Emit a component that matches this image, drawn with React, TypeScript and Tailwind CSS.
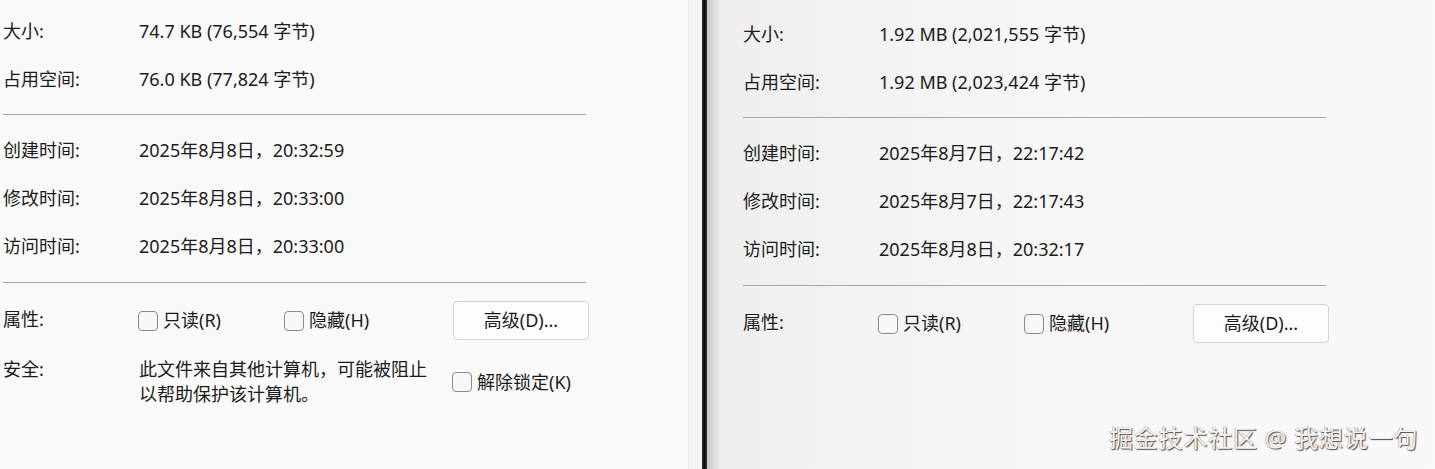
import React from 'react';

type Row = { label: string; value: string };

const font = 'font-["Noto_Sans","Noto_Sans_CJK_SC",sans-serif]';

function CheckBox({ label }: { label: string }) {
  return (
    <label className="flex items-center gap-[5px]">
      <span className="block w-[20px] h-[20px] rounded-[4px] border border-[#8c8c8c] bg-[#f7f7f7]" />
      <span>{label}</span>
    </label>
  );
}

function InfoRow({ label, value }: Row) {
  return (
    <div className="flex items-center h-[48px]">
      <div className="w-[136px]">{label}</div>
      <div>{value}</div>
    </div>
  );
}

function Panel({
  top,
  sizeRows,
  timeRows,
  security,
}: {
  top: string;
  sizeRows: Row[];
  timeRows: Row[];
  security?: boolean;
}) {
  return (
    <div className={`${top} pl-[3px] text-[18px] leading-[25px] text-[#1b1b1b] ${font}`}>
      {sizeRows.map((r) => (
        <InfoRow key={r.label} {...r} />
      ))}
      <div className="mt-[11px] h-px w-[583px] bg-[#a6a6a6]" />
      <div className="mt-[11px]">
        {timeRows.map((r) => (
          <InfoRow key={r.label} {...r} />
        ))}
      </div>
      <div className="mt-[12px] h-px w-[583px] bg-[#a6a6a6]" />
      <div className="mt-[18px] flex items-center h-[39px]">
        <div className="w-[135px] -mt-[3px]">属性:</div>
        <div className="w-[146px]">
          <CheckBox label="只读(R)" />
        </div>
        <div className="w-[169px]">
          <CheckBox label="隐藏(H)" />
        </div>
        <button className="w-[136px] h-[39px] rounded-[4px] border border-[#d3d3d3] bg-[#fdfdfd] text-[18px]">
          高级(D)...
        </button>
      </div>
      {security && (
        <div className="mt-[17px] flex items-center">
          <div className="w-[136px] self-start">安全:</div>
          <div className="w-[313px]">
            此文件来自其他计算机，可能被阻止
            <br />
            以帮助保护该计算机。
          </div>
          <CheckBox label="解除锁定(K)" />
        </div>
      )}
    </div>
  );
}

export default function App() {
  return (
    <div className="relative flex w-[1435px] h-[469px] overflow-hidden bg-[#f9f9f9]">
      <div className="w-[688px] shrink-0 bg-[#f9f9f9]">
        <Panel
          top="pt-[7px]"
          security
          sizeRows={[
            { label: '大小:', value: '74.7 KB (76,554 字节)' },
            { label: '占用空间:', value: '76.0 KB (77,824 字节)' },
          ]}
          timeRows={[
            { label: '创建时间:', value: '2025年8月8日，20:32:59' },
            { label: '修改时间:', value: '2025年8月8日，20:33:00' },
            { label: '访问时间:', value: '2025年8月8日，20:33:00' },
          ]}
        />
      </div>
      <div className="w-[14px] shrink-0 bg-[#f3f3f3] border-l border-[#ececec]" />
      <div className="w-[5px] shrink-0 bg-gradient-to-r from-[#2a2a2a] via-[#0c0c0c] to-[#3a3a3a]" />
      <div className="w-[13px] shrink-0 bg-gradient-to-r from-[#c6c6c6] to-[#ececec]" />
      <div className="flex-1 pl-[20px] bg-gradient-to-r from-[#efefef] via-[#f7f7f7] to-[#f9f9f9]">
        <Panel
          top="pt-[10px]"
          sizeRows={[
            { label: '大小:', value: '1.92 MB (2,021,555 字节)' },
            { label: '占用空间:', value: '1.92 MB (2,023,424 字节)' },
          ]}
          timeRows={[
            { label: '创建时间:', value: '2025年8月7日，22:17:42' },
            { label: '修改时间:', value: '2025年8月7日，22:17:43' },
            { label: '访问时间:', value: '2025年8月8日，20:32:17' },
          ]}
        />
      </div>
      <div
        className={`absolute left-[1109px] top-[420px] text-[24px] tracking-[0.8px] text-[#f4f4f4] [text-shadow:1px_1px_1px_#4a4a4a,-0.5px_-0.5px_0_#9a9a9a] ${font}`}
      >
        掘金技术社区 @ 我想说一句
      </div>
    </div>
  );
}
